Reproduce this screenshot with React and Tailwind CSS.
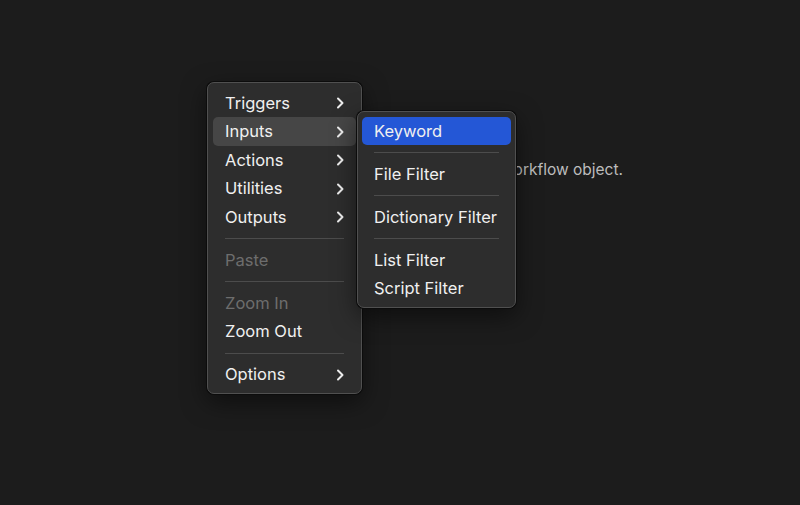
import React from "react";

const Chevron = () => (
  <svg width="9" height="12" viewBox="0 0 9 12" className="shrink-0">
    <path d="M2 1.5 L6.5 6 L2 10.5" fill="none" stroke="#ececec" strokeWidth="2" strokeLinecap="round" strokeLinejoin="round" />
  </svg>
);

const Item = ({ label, sub, disabled, active, blue }) => (
  <div
    className={
      "flex h-[28.5px] items-center justify-between rounded-[5px] pl-3 pr-[11px] " +
      (active ? "bg-[#464646] " : "") +
      (blue ? "bg-[#2457d6] " : "")
    }
  >
    <span className={disabled ? "text-[#6d6d6d]" : "text-[#f0f0f0]"}>{label}</span>
    {sub && <Chevron />}
  </div>
);

const Sep = () => (
  <div className="flex h-[14.5px] items-center px-3">
    <div className="h-px w-full bg-[#4c4c4c]" />
  </div>
);

export default function App() {
  return (
    <div
      className="relative h-[505px] w-[800px] overflow-hidden bg-[#1c1c1c] text-[16.5px]"
      style={{ fontFamily: "Inter, 'Liberation Sans', sans-serif" }}
    >
      <div className="flex h-[340px] items-center justify-end pr-[177px] text-[15.5px] text-[#bcbcbc]">
        Right click on the canvas to add a new workflow object.
      </div>

      <div className="absolute left-[207px] top-[82px] w-[155px] rounded-[7px] border border-[#505050] bg-[#2d2d2d] px-[5px] pb-[4.5px] pt-[5.75px] shadow-[0_0_0_1px_#0c0c0c,0_8px_24px_rgba(0,0,0,0.5)]">
        <Item label="Triggers" sub />
        <Item label="Inputs" sub active />
        <Item label="Actions" sub />
        <Item label="Utilities" sub />
        <Item label="Outputs" sub />
        <Sep />
        <Item label="Paste" disabled />
        <Sep />
        <Item label="Zoom In" disabled />
        <Item label="Zoom Out" />
        <Sep />
        <Item label="Options" sub />
      </div>

      <div className="absolute left-[357px] top-[111px] w-[159px] rounded-[7px] border border-[#505050] bg-[#2d2d2d] px-[4px] pb-[3.75px] pt-[4.75px] shadow-[0_0_0_1px_#0c0c0c,0_8px_24px_rgba(0,0,0,0.5)]">
        <Item label="Keyword" blue />
        <Sep />
        <Item label="File Filter" />
        <Sep />
        <Item label="Dictionary Filter" />
        <Sep />
        <Item label="List Filter" />
        <Item label="Script Filter" />
      </div>
    </div>
  );
}
